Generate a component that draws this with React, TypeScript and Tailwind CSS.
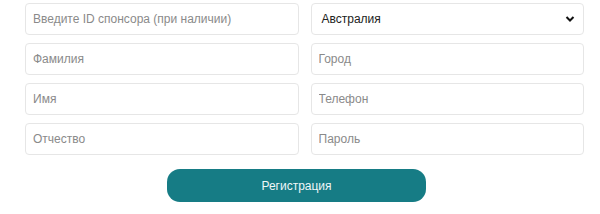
import React from "react";

const inputCls =
  "h-[32px] w-full rounded-[4px] border border-[#e6e6e6] bg-white px-[7px] text-[12px] text-[#333] placeholder:text-[#8a8a8a] outline-none";

export default function App() {
  return (
    <div
      className="w-[600px] h-[214px] bg-white pt-[3px]"
      style={{ fontFamily: '"Liberation Sans", Arial, sans-serif' }}
    >
      <div className="ml-[25px] w-[559px] grid grid-cols-2 gap-x-[12px] gap-y-[8px]">
        <input className={inputCls} placeholder="Введите ID спонсора (при наличии)" />
        <div className="relative h-[32px] w-full rounded-[4px] border border-[#e6e6e6] bg-white flex items-center pl-[10px] pr-[8px]">
          <span className="text-[12px] text-[#222]">Австралия</span>
          <svg
            className="ml-auto"
            width="10"
            height="8"
            viewBox="0 0 10 8"
            fill="none"
          >
            <path d="M1.5 2L5 5.5L8.5 2" stroke="#111" strokeWidth="2" />
          </svg>
        </div>
        <input className={inputCls} placeholder="Фамилия" />
        <input className={inputCls} placeholder="Город" />
        <input className={inputCls} placeholder="Имя" />
        <input className={inputCls} placeholder="Телефон" />
        <input className={inputCls} placeholder="Отчество" />
        <input className={inputCls} placeholder="Пароль" />
      </div>
      <div className="mt-[14px] ml-[167px]">
        <button className="h-[33px] w-[259px] rounded-[13px] bg-[#167c85] text-[12px] text-[#eef7f8]">
          Регистрация
        </button>
      </div>
    </div>
  );
}
